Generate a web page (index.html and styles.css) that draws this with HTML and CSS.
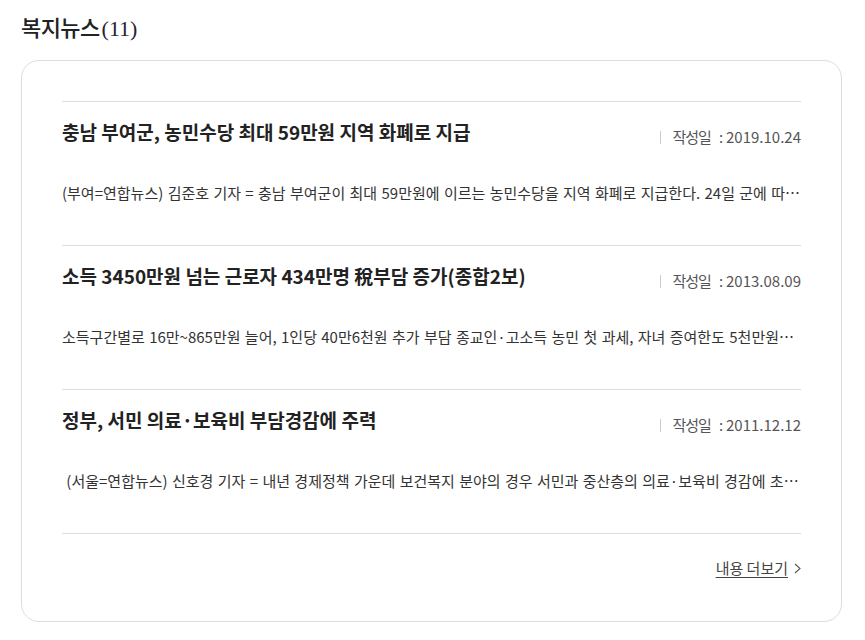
FILE: index.html
```html
<html>
<head>
<title>복지뉴스</title>
<meta charset="utf-8">
<link rel="stylesheet" href="styles.css">
</head>
<body>

<div class="wrap">
	<h2 class="tit">복지뉴스<span class="cnt">(11)</span></h2>

	<div class="box">
		<ul class="news">
			<li class="item">
				<div class="head">
					<strong class="subject">충남 부여군, 농민수당 최대 59만원 지역 화폐로 지급</strong>
					<span class="date"><em>작성일</em><i>:</i>2019.10.24</span>
				</div>
				<p class="desc">(부여=연합뉴스) 김준호 기자 = 충남 부여군이 최대 59만원에 이르는 농민수당을 지역 화폐로 지급한다. 24일 군에 따르면 농민수당은 올해부터 지급된다.</p>
			</li>
			<li class="item">
				<div class="head">
					<strong class="subject">소득 3450만원 넘는 근로자 434만명 稅부담 증가(종합2보)</strong>
					<span class="date"><em>작성일</em><i>:</i>2013.08.09</span>
				</div>
				<p class="desc">소득구간별로 16만~865만원 늘어, 1인당 40만6천원 추가 부담 종교인·고소득 농민 첫 과세, 자녀 증여한도 5천만원으로 상향</p>
			</li>
			<li class="item">
				<div class="head">
					<strong class="subject">정부, 서민 의료·보육비 부담경감에 주력</strong>
					<span class="date"><em>작성일</em><i>:</i>2011.12.12</span>
				</div>
				<p class="desc">&nbsp;(서울=연합뉴스) 신호경 기자 = 내년 경제정책 가운데 보건복지 분야의 경우 서민과 중산층의 의료·보육비 경감에 초점이 맞춰졌다.</p>
			</li>
		</ul>

		<div class="more">
			<a href="#">내용 더보기</a>
			<svg width="7" height="11" viewBox="0 0 7 11"><path d="M1 1 L6 5.5 L1 10" fill="none" stroke="#555" stroke-width="1.1"/></svg>
		</div>
	</div>
</div>

</body>
</html>
```

FILE: styles.css
```css
	body{
		margin: 0;
		background: #fff;
		font-family: "Noto Sans CJK KR", "Noto Sans", sans-serif;
		color: #222;
	}

	.wrap{
		padding: 10px 23px 18px 21px;
	}

	.tit{
		display: flex;
		align-items: baseline;
		height: 32px;
		margin: 0;
		font-size: 22px;
		line-height: 32px;
		font-weight: 500;
		letter-spacing: -0.6px;
		color: #222;
	}

	.tit .cnt{
		font-family: "Liberation Serif", serif;
		font-size: 22px;
		font-weight: 400;
		letter-spacing: 0;
		margin-left: 2px;
		color: #2a2230;
	}

	.box{
		margin-top: 18px;
		padding: 40px 40px 43px 40px;
		border: 1px solid #ddd;
		border-radius: 18px;
	}

	.news{
		list-style: none;
		margin: 0;
		padding: 0;
	}

	.item{
		border-top: 1px solid #ddd;
		padding: 16px 0 41px 0;
	}

	.item:last-child{
		border-bottom: 1px solid #ddd;
	}

	.head{
		display: flex;
		justify-content: space-between;
		align-items: flex-start;
	}

	.subject{
		font-size: 19px;
		line-height: 28px;
		font-weight: 700;
		color: #222;
	}

	.date{
		display: flex;
		align-items: center;
		margin-top: 10px;
		font-size: 15px;
		line-height: 18px;
		color: #555;
	}

	.date:before{
		content: "";
		width: 1px;
		height: 13px;
		background: #ccc;
		margin-right: 11px;
	}

	.date em{
		font-style: normal;
		letter-spacing: -1px;
	}

	.date i{
		font-style: normal;
		margin: 0 3px 0 8px;
	}

	.desc{
		margin: 36px 0 0 0;
		font-size: 15px;
		line-height: 22px;
		color: #333;
		word-spacing: 1px;
		white-space: nowrap;
		overflow: hidden;
		text-overflow: ellipsis;
	}

	.more{
		display: flex;
		justify-content: flex-end;
		align-items: center;
		gap: 6px;
		padding-top: 24px;
		line-height: 20px;
	}

	.more a{
		font-size: 15px;
		color: #444;
		text-decoration: underline;
		text-underline-offset: 3px;
	}
```
